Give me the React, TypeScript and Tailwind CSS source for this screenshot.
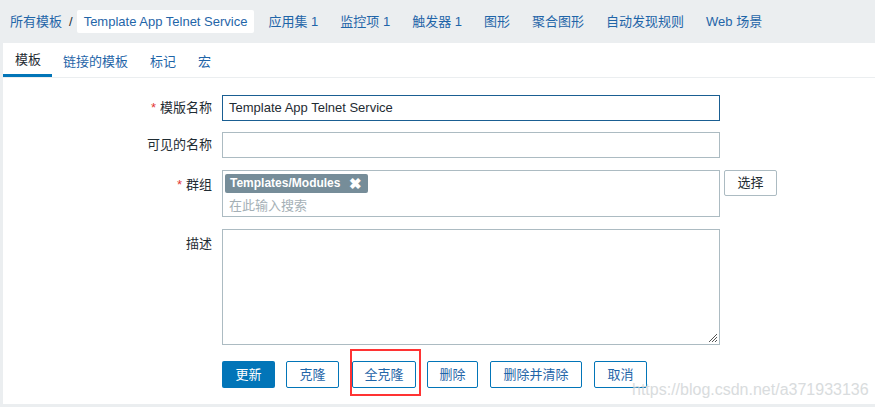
import React from "react";

const FONT = { fontFamily: '"Liberation Sans", Arial, "Noto Sans CJK SC", sans-serif' };

const navItems = ["应用集 1", "监控项 1", "触发器 1", "图形", "聚合图形", "自动发现规则", "Web 场景"];
const tabs = ["模板", "链接的模板", "标记", "宏"];

function Label({ text, required }: { text: string; required?: boolean }) {
  return (
    <div className="w-[219px] shrink-0 pr-[10px] text-right text-[#1f2c33]">
      {required && <span className="mr-[4px] text-[#e33734]">*</span>}
      {text}
    </div>
  );
}

export default function App() {
  return (
    <div className="relative h-[407px] w-[875px] overflow-hidden bg-[#ebeef0] text-[13px]" style={FONT}>
      {/* top nav */}
      <div className="flex h-[43px] items-center pl-[10px] text-[#1f65a8]">
        <span>所有模板</span>
        <span className="ml-[7px] mr-[4px] text-[#1f2c33]">/</span>
        <span className="flex h-[23px] items-center rounded-[2px] bg-white px-[7px]">Template App Telnet Service</span>
        <div className="ml-[14px] flex gap-[22px]">
          {navItems.map((n) => (
            <span key={n}>{n}</span>
          ))}
        </div>
      </div>

      {/* panel */}
      <div className="ml-[3px] h-[361px] bg-white">
        <div className="flex h-[35px] border-b border-[#ebeef0] pl-[12px]">
          {tabs.map((t, i) => (
            <div
              key={t}
              className={
                i === 0
                  ? "-ml-[12px] flex h-full items-center border-b-[3px] border-[#0275b8] pl-[12px] pr-[11px] pt-[3px] text-[#1f2c33]"
                  : "flex h-full items-center px-[11px] pt-[3px] text-[#1f65a8]"
              }
            >
              {t}
            </div>
          ))}
        </div>

        <div className="pt-[17px]">
          <div className="flex items-center">
            <Label text="模版名称" required />
            <div className="flex h-[26px] w-[498px] items-center border border-[#1a5e92] px-[6px] text-[#1f2c33]">
              Template App Telnet Service
            </div>
          </div>

          <div className="mt-[11px] flex items-center">
            <Label text="可见的名称" />
            <div className="h-[26px] w-[498px] border border-[#acbbc2]" />
          </div>

          <div className="mt-[12px] flex items-start">
            <div className="pt-[5px]">
              <Label text="群组" required />
            </div>
            <div className="h-[47px] w-[498px] border border-[#acbbc2] px-[2px] pt-[2px]">
              <span className="inline-flex h-[19px] items-center gap-[9px] rounded-[2px] bg-[#768d99] pl-[5px] pr-[6px] text-[12px] font-bold text-white">
                Templates/Modules
                <span className="text-[15px] leading-none">✖</span>
              </span>
              <div className="mt-[3px] pl-[4px] text-[#a5b0b6]">在此输入搜索</div>
            </div>
            <button className="ml-[4px] h-[26px] w-[53px] rounded-[2px] border border-[#acbbc2] bg-white text-[#1f2c33]">选择</button>
          </div>

          <div className="mt-[12px] flex items-start">
            <div className="pt-[5px]">
              <Label text="描述" />
            </div>
            <div className="relative h-[116px] w-[498px] border border-[#acbbc2]">
              <svg className="absolute bottom-[2px] right-[2px]" width="9" height="9" viewBox="0 0 9 9">
                <path d="M9 1 L1 9 M9 4 L4 9 M9 7 L7 9" stroke="#555" strokeWidth="1" />
              </svg>
            </div>
          </div>

          <div className="ml-[219px] mt-[16px] flex">
            <button className="h-[27px] w-[53px] rounded-[2px] bg-[#0275b8] text-white">更新</button>
            <button className="ml-[11px] h-[27px] w-[53px] rounded-[2px] border border-[#0275b8] bg-white text-[#1f65a8]">克隆</button>
            <div className="relative ml-[11px]">
              <button className="ml-[2px] h-[27px] w-[64px] rounded-[2px] border border-[#0275b8] bg-white text-[#1f65a8]">全克隆</button>
              <div className="pointer-events-none absolute left-0 -top-[12px] h-[47px] w-[71px] border-2 border-[#f33]" />
            </div>
            <button className="ml-[11px] h-[27px] w-[51px] rounded-[2px] border border-[#0275b8] bg-white text-[#1f65a8]">删除</button>
            <button className="ml-[12px] h-[27px] w-[92px] rounded-[2px] border border-[#0275b8] bg-white text-[#1f65a8]">删除并清除</button>
            <button className="ml-[12px] h-[27px] w-[53px] rounded-[2px] border border-[#0275b8] bg-white text-[#1f65a8]">取消</button>
          </div>
        </div>
      </div>

      <div className="pointer-events-none absolute left-[632px] top-[378px] text-[16px] text-[#d0d4d6] opacity-80">
        https://blog.csdn.net/a371933136
      </div>
    </div>
  );
}
